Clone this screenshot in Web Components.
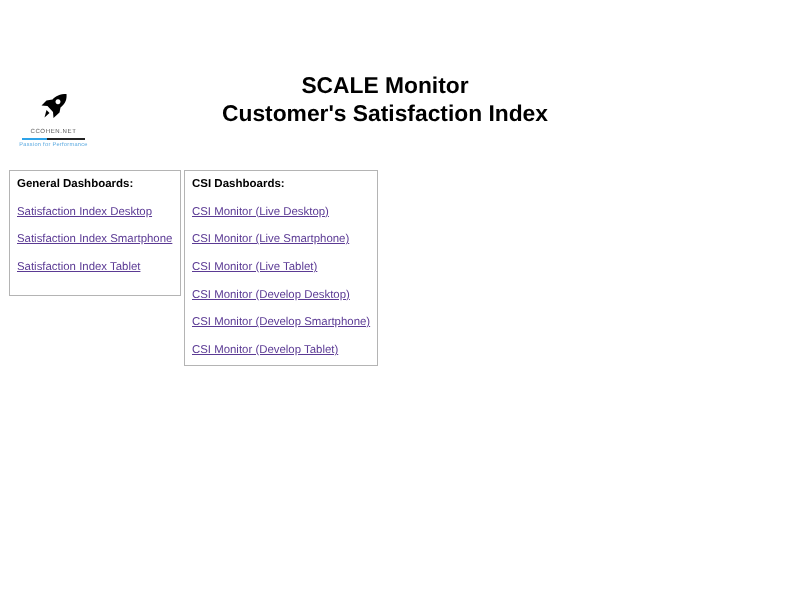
<!DOCTYPE html>
<html>
<head>
<meta charset="utf-8">
<title>SCALE Monitor</title>
<style>
  body { margin: 0; background: #fff; font-family: "Liberation Sans", Arial, sans-serif; text-rendering: geometricPrecision; }
</style>
</head>
<body>
<template id="page-header-tpl">
  <style>
    :host { display: flex; padding: 72px 0 0 20px; height: 170px; box-sizing: border-box; }
    .logo { width: 67px; flex: none; display: flex; flex-direction: column; align-items: center; padding-top: 21px; filter: blur(.4px); }
    .logo svg { display: block; flex: none; }
    .name { font-size: 6px; letter-spacing: .65px; color: #555; line-height: 7px; margin-top: 8px; }
    .bar { width: 63px; height: 2px; margin-top: 1.5px; background: linear-gradient(90deg, #2ea3e8 0 40%, #222 40% 100%); }
    .tag { font-size: 5.6px; letter-spacing: .3px; color: #5aa9e0; line-height: 7px; margin-top: 2.5px; white-space: nowrap; }
    h1 { margin: 0; flex: 1; padding-right: 117px; text-align: center; font-size: 22.8px; line-height: 27.6px; font-weight: bold; color: #000; filter: blur(.3px); }
  </style>
  <div class="logo">
    <svg width="28" height="28" viewBox="0 0 28 28">
      <path fill="#000" fill-rule="evenodd" d="M26.500 1C20 1 15.500 3 12.500 6.500L6.500 7.500L1.500 12.500L7.500 13L13 19L13.500 25L19.500 19.500L20.500 14.500C25.500 10.500 27 6.500 26.500 1ZM18 6.300A2.500 2.500 0 1 1 17.990 6.300Z"/>
      <path fill="#000" d="M6.500 17L9.500 20L4.500 24.500Z"/>
    </svg>
    <div class="name">CCOHEN.NET</div>
    <div class="bar"></div>
    <div class="tag">Passion for Performance</div>
  </div>
  <h1><slot></slot></h1>
</template>

<template id="link-box-tpl">
  <style>
    :host { display: block; border: 1px solid #b4b4b4; padding: 6px 7px 0; box-sizing: border-box; font-size: 11.42px; }
    .title { font-weight: bold; font-size: 11.5px; color: #000; line-height: 14px; margin-bottom: 13.7px; filter: blur(.3px); }
    ::slotted(dash-link) { margin-bottom: 13.7px; }
  </style>
  <div class="title"></div>
  <slot></slot>
</template>

<template id="dash-link-tpl">
  <style>
    :host { display: block; line-height: 14px; white-space: nowrap; filter: blur(.3px); }
    a { color: #5b3a94; text-decoration: underline; }
  </style>
  <a href="#"><slot></slot></a>
</template>

<template id="dash-row-tpl">
  <style>
    :host { display: flex; align-items: flex-start; gap: 3px; padding-left: 9px; }
  </style>
  <slot></slot>
</template>

<script>
  function define(tag, tplId, init) {
    customElements.define(tag, class extends HTMLElement {
      constructor() {
        super();
        this.attachShadow({ mode: 'open' });
        this.shadowRoot.appendChild(document.getElementById(tplId).content.cloneNode(true));
      }
      connectedCallback() {
        if (init) init(this);
      }
    });
  }
  define('page-header', 'page-header-tpl');
  define('dash-row', 'dash-row-tpl');
  define('dash-link', 'dash-link-tpl');
  define('link-box', 'link-box-tpl', (el) => {
    el.shadowRoot.querySelector('.title').textContent = el.getAttribute('heading') || '';
    el.style.width = el.getAttribute('w') + 'px';
    el.style.height = el.getAttribute('h') + 'px';
  });
</script>

<page-header>SCALE Monitor<br>Customer's Satisfaction Index</page-header>
<dash-row>
  <link-box heading="General Dashboards:" w="172" h="126">
    <dash-link>Satisfaction Index Desktop</dash-link>
    <dash-link>Satisfaction Index Smartphone</dash-link>
    <dash-link>Satisfaction Index Tablet</dash-link>
  </link-box>
  <link-box heading="CSI Dashboards:" w="194" h="196">
    <dash-link>CSI Monitor (Live Desktop)</dash-link>
    <dash-link>CSI Monitor (Live Smartphone)</dash-link>
    <dash-link>CSI Monitor (Live Tablet)</dash-link>
    <dash-link>CSI Monitor (Develop Desktop)</dash-link>
    <dash-link>CSI Monitor (Develop Smartphone)</dash-link>
    <dash-link>CSI Monitor (Develop Tablet)</dash-link>
  </link-box>
</dash-row>
</body>
</html>
